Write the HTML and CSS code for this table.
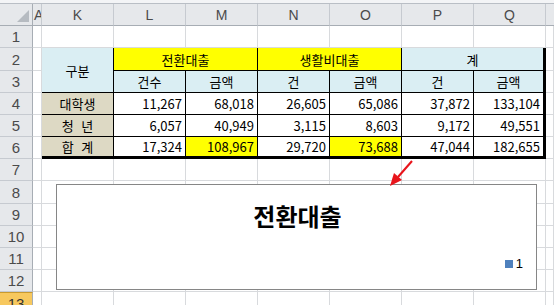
FILE: index.html
```html
<!DOCTYPE html>
<html lang="ko">
<head>
<meta charset="utf-8">
<title>Sheet</title>
<link rel="stylesheet" href="styles.css">
</head>
<body>
<div class="topstrip"></div>
<div class="sheet">
  <!-- column header row -->
  <div class="corner"><svg width="33" height="22" viewBox="0 0 33 22"><polygon points="29,6 29,18 17,18" fill="#b6bbc1"/></svg></div>
  <div class="ch ch-a">A</div>
  <div class="ch">K</div>
  <div class="ch">L</div>
  <div class="ch">M</div>
  <div class="ch">N</div>
  <div class="ch">O</div>
  <div class="ch">P</div>
  <div class="ch">Q</div>
  <div class="ch ch-last"></div>

  <!-- data table K2:Q6 -->
  <div class="tbl">
    <div class="tc hd span-r2">구분</div>
    <div class="tc yl span-c2">전환대출</div>
    <div class="tc yl span-c2">생활비대출</div>
    <div class="tc hd span-c2 last">계</div>
    <div class="tc hd">건수</div>
    <div class="tc hd">금액</div>
    <div class="tc hd">건</div>
    <div class="tc hd">금액</div>
    <div class="tc hd">건</div>
    <div class="tc hd last">금액</div>

    <div class="tc lb">대학생</div>
    <div class="tc num">11,267</div>
    <div class="tc num">68,018</div>
    <div class="tc num">26,605</div>
    <div class="tc num">65,086</div>
    <div class="tc num">37,872</div>
    <div class="tc num last">133,104</div>

    <div class="tc lb">청 년</div>
    <div class="tc num">6,057</div>
    <div class="tc num">40,949</div>
    <div class="tc num">3,115</div>
    <div class="tc num">8,603</div>
    <div class="tc num">9,172</div>
    <div class="tc num last">49,551</div>

    <div class="tc lb bot">합 계</div>
    <div class="tc num bot">17,324</div>
    <div class="tc num bot yl">108,967</div>
    <div class="tc num bot">29,720</div>
    <div class="tc num bot yl">73,688</div>
    <div class="tc num bot">47,044</div>
    <div class="tc num bot last">182,655</div>
  </div>

  <!-- row 1 -->
  <div class="rh">1</div>
  <div class="c"></div><div class="c"></div><div class="c"></div><div class="c"></div><div class="c"></div><div class="c"></div><div class="c"></div><div class="c"></div><div class="c"></div>
  <!-- rows 2-6 (table occupies K..Q) -->
  <div class="rh">2</div><div class="c"></div><div class="c"></div>
  <div class="rh">3</div><div class="c"></div><div class="c"></div>
  <div class="rh">4</div><div class="c"></div><div class="c"></div>
  <div class="rh">5</div><div class="c"></div><div class="c"></div>
  <div class="rh">6</div><div class="c"></div><div class="c"></div>
  <!-- rows 7-13 -->
  <div class="rh">7</div>
  <div class="c"></div><div class="c"></div><div class="c"></div><div class="c"></div><div class="c"></div><div class="c"></div><div class="c"></div><div class="c"></div><div class="c"></div>
  <div class="rh">8</div>
  <div class="c"></div><div class="c"></div><div class="c"></div><div class="c"></div><div class="c"></div><div class="c"></div><div class="c"></div><div class="c"></div><div class="c"></div>
  <div class="rh">9</div>
  <div class="c"></div><div class="c"></div><div class="c"></div><div class="c"></div><div class="c"></div><div class="c"></div><div class="c"></div><div class="c"></div><div class="c"></div>
  <div class="rh">10</div>
  <div class="c"></div><div class="c"></div><div class="c"></div><div class="c"></div><div class="c"></div><div class="c"></div><div class="c"></div><div class="c"></div><div class="c"></div>
  <div class="rh">11</div>
  <div class="c"></div><div class="c"></div><div class="c"></div><div class="c"></div><div class="c"></div><div class="c"></div><div class="c"></div><div class="c"></div><div class="c"></div>
  <div class="rh">12</div>
  <div class="c"></div><div class="c"></div><div class="c"></div><div class="c"></div><div class="c"></div><div class="c"></div><div class="c"></div><div class="c"></div><div class="c"></div>
  <div class="rh rh-sel">13</div>
  <div class="c"></div><div class="c"></div><div class="c"></div><div class="c"></div><div class="c"></div><div class="c"></div><div class="c"></div><div class="c"></div><div class="c"></div>

  <!-- floating chart -->
  <div class="chart">
    <div class="chart-title">전환대출</div>
    <div class="legend"><span class="swatch"></span><span class="legend-label">1</span></div>
  </div>

  <!-- annotation arrow -->
  <svg class="arrow" width="30" height="30" viewBox="0 0 30 30">
    <line x1="26" y1="1" x2="12" y2="17" stroke="#e8141b" stroke-width="2"/>
    <polygon points="4,26 8,13 16,20" fill="#e8141b"/>
  </svg>
</div>
</body>
</html>
```

FILE: styles.css
```css
* { box-sizing: border-box; }
html, body { margin: 0; padding: 0; background: #ffffff; }
body {
  width: 554px;
  height: 305px;
  overflow: hidden;
  font-family: "Noto Sans CJK KR", "Noto Sans", sans-serif;
  font-size: 13px;
  color: #000;
}
.topstrip {
  height: 4px;
  background: #f3f4f6;
  border-bottom: 1px solid #b9bec5;
}
.sheet {
  position: relative;
  display: grid;
  grid-template-columns: 33px 9px repeat(7, 72px) 1fr;
  grid-template-rows: 22px 22px 23px 22px 22px 22px 22px 22px 23px 22px 22px 22px 22px 22px;
}
.corner {
  background: #e6e8eb;
  border-right: 1px solid #a7adb4;
  border-bottom: 1px solid #a7adb4;
}
.corner svg { display: block; }
.ch {
  background: #e6e8eb;
  border-right: 1px solid #c6cad0;
  border-bottom: 1px solid #a7adb4;
  color: #4b4b4b;
  font-family: "Liberation Sans", "Noto Sans", sans-serif;
  font-size: 14px;
  display: flex;
  align-items: center;
  justify-content: center;
}
.ch-a {
  justify-content: flex-start;
  overflow: hidden;
  padding-left: 1px;
}
.ch-last { border-right: none; }
.rh {
  background: #e6e8eb;
  border-right: 1px solid #a7adb4;
  border-bottom: 1px solid #c6cad0;
  color: #4b4b4b;
  font-family: "Liberation Sans", "Noto Sans", sans-serif;
  font-size: 15px;
  display: flex;
  align-items: center;
  justify-content: center;
}
.rh-sel {
  background: #f7c85e;
  border-top: 1px solid #c99a2e;
  color: #333;
}
.c {
  border-right: 1px solid #d8dadd;
  border-bottom: 1px solid #d8dadd;
}
.tbl {
  grid-column: 3 / 10;
  grid-row: 3 / 8;
  margin-left: -1px;
  margin-top: -1px;
  border-left: 1px solid #000;
  border-top: 1px solid #000;
  display: grid;
  grid-template-columns: repeat(7, 72px);
  grid-template-rows: 23px 22px 22px 22px 22px;
  background: #fff;
}
.tc {
  border-right: 1px solid #000;
  border-bottom: 1px solid #000;
  display: flex;
  align-items: center;
  justify-content: center;
  white-space: nowrap;
  line-height: 1;
}
.tc.last { border-right-width: 3px; }
.tc.bot { border-bottom-width: 3px; }
.span-r2 { grid-row: span 2; }
.span-c2 { grid-column: span 2; }
.hd { background: #daeef3; }
.yl { background: #ffff00; }
.lb { background: #ddd9c4; word-spacing: 4px; }
.num { justify-content: flex-end; padding-right: 3px; }
.chart {
  position: absolute;
  left: 56px;
  top: 180px;
  width: 481px;
  height: 106px;
  background: #fff;
  border: 1px solid #868686;
}
.chart-title {
  text-align: center;
  font-size: 24px;
  font-weight: bold;
  margin-top: 15px;
  line-height: 32px;
  padding-left: 2px;
}
.legend {
  position: absolute;
  right: 13px;
  top: 71px;
  display: flex;
  align-items: center;
  gap: 3px;
  font-size: 12px;
}
.swatch {
  width: 8px;
  height: 8px;
  background: #4f81bd;
}
.legend-label { font-family: "Liberation Sans", sans-serif; font-size: 13px; }
.arrow {
  position: absolute;
  left: 386px;
  top: 156px;
}
```
